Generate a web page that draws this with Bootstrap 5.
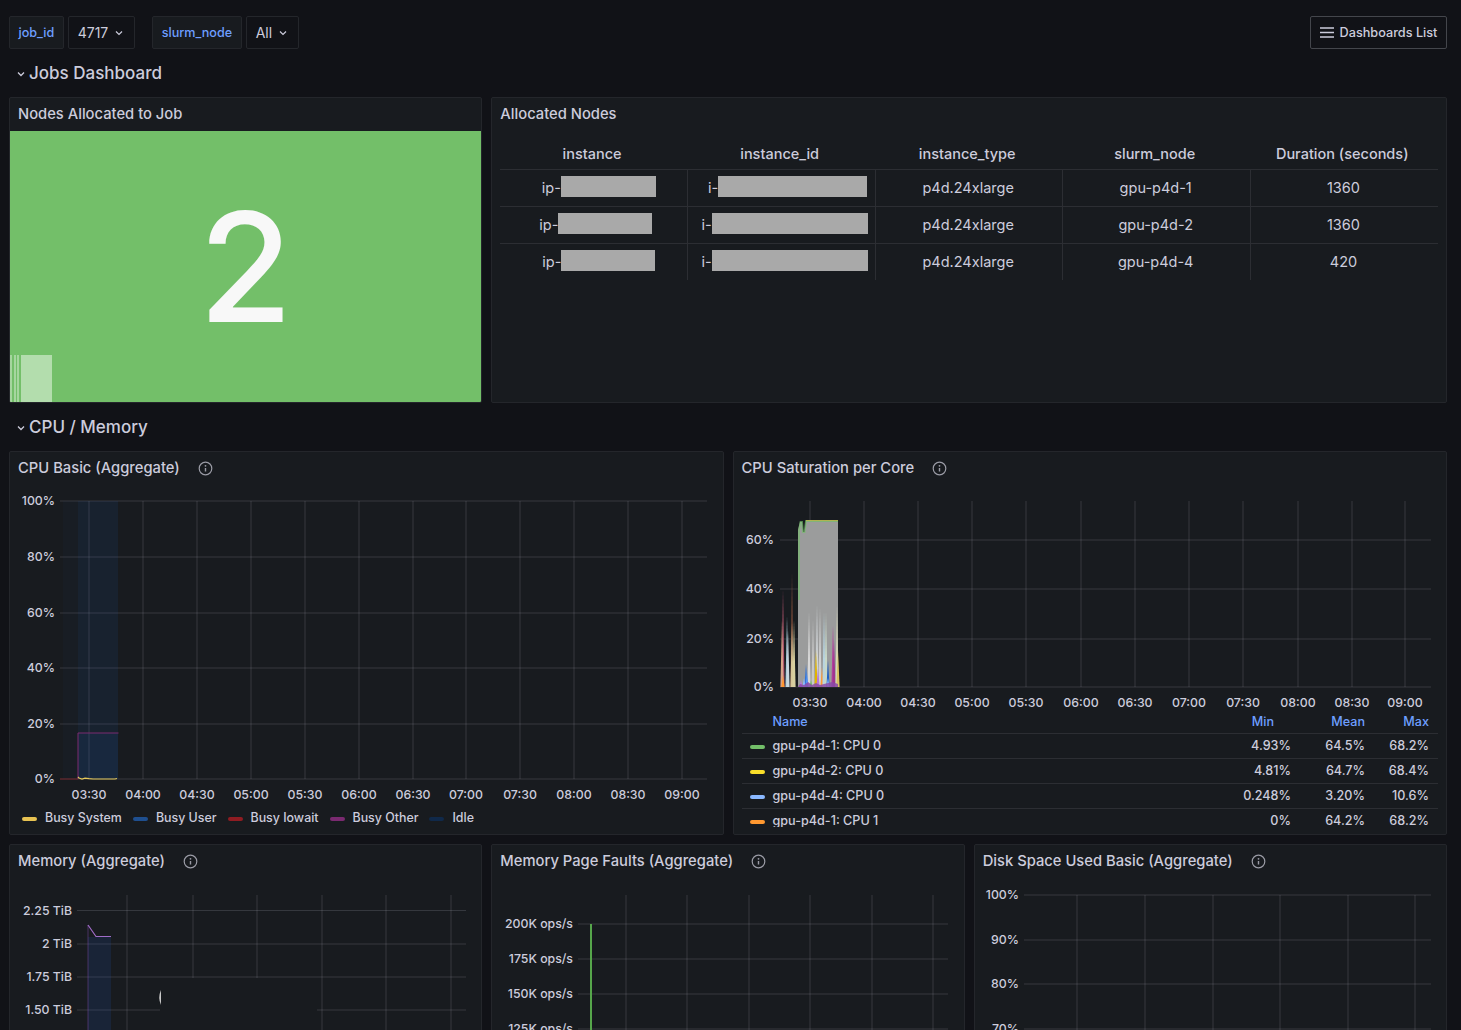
<!DOCTYPE html>
<html lang="en">
<head>
    <meta charset="UTF-8">
    <title>Jobs Dashboard</title>
    <link rel="stylesheet" href="https://cdn.jsdelivr.net/npm/bootstrap@5.3.2/dist/css/bootstrap.min.css">
    <style>
        html, body { height: 1030px; overflow: hidden; }
        body { background: #111217; color: #ccccdc; font-family: Inter, "Liberation Sans", sans-serif; font-size: 14px; padding: 16px 14px 0 9px; }
        .dash-row { --bs-gutter-x: 9px; --bs-gutter-y: 0; }
        .var-tag, .var-val { height: 33px; border: 1px solid #24262b; border-radius: 2px; display: flex; align-items: center; font-size: 12.6px; font-weight: 500; }
        .var-tag { background: #181b1f; color: #6e9fff; padding: 2px 8.5px 0; }
        .var-val { color: #ccccdc; background: #111217; padding: 0 11px 0 9px; font-size: 14px; font-weight: 400; gap: 7px; }
        .tag-gap { margin-left: 17px; }
        .list-btn { height: 33px; width: 137px; padding: 0; border: 1px solid #44464c; border-radius: 2px; color: #ccccdc; font-size: 12.7px; font-weight: 500; gap: 6px; background: transparent; }
        .sect-title { height: 48px; font-size: 17px; font-weight: 500; color: #ccccdc; padding: 2px 0 0 8px; gap: 4px; }
        .dash-panel { background: #181b1f; border: 1px solid #24262b; border-radius: 2px; overflow: hidden; display: flex; flex-direction: column; }
        .h-stat { height: 306px; }
        .h-cpu { height: 384px; }
        .h-mem { height: 200px; margin-top: 9px; }
        .panel-head { height: 33px; flex: none; padding: 0 8px; font-size: 14.75px; font-weight: 500; gap: 18px; color: #ccccdc; }
        .stat-box { flex: 1; background: #73bf69; color: #f8f8f8; font-size: 152px; line-height: 1; position: relative; overflow: hidden; }
        .stat-box span { font-weight: 500; }
        .stat-spark { position: absolute; left: 0; bottom: 0; width: 42px; height: 47px; background: linear-gradient(90deg, #a5d69e 0 2px, #73bf69 2px 4px, #a5d69e 4px 6px, #73bf69 6px 7px, #a5d69e 7px 9px, #73bf69 9px 11px, #b3ddad 11px); }
        .nodes-wrap { padding: 0 8px; }
        .nodes-table { --bs-table-bg: transparent; --bs-table-color: #ccccdc; --bs-table-border-color: #2c2e33; table-layout: fixed; margin: 0; font-size: 14.5px; text-align: center; }
        .nodes-table th { height: 38px; font-weight: 500; padding: 8px 4px 0 0; vertical-align: middle; }
        .nodes-table td { height: 37px; padding: 0; vertical-align: middle; border-left: 1px solid #2c2e33; }
        .nodes-table td:first-child { border-left: 0; }
        .nodes-table td:nth-child(n+3) { padding-right: 2px; }
        .nodes-table tr:last-child td { border-bottom: 0; }
        .nodes-table td.pad-10 { padding-left: 10px; }
        .nodes-table td.pad-4 { padding-left: 4px; }
        .nodes-table td.pad-12 { padding-left: 12px; }
        .nodes-table td.pad-6 { padding-left: 6px; }
        .redact { display: inline-block; height: 21px; background: #a9a9a9; vertical-align: -4px; }
        .chart-svg { display: block; flex: none; }
        .chart-svg text { font-family: Inter, "Liberation Sans", sans-serif; font-size: 12.3px; font-weight: 500; fill: #ccccdc; }
        .legend-row { font-size: 12.4px; font-weight: 500; padding-left: 12px; }
        .legend-item { display: flex; align-items: center; gap: 8px; margin-right: 11px; }
        .legend-bottom { margin-bottom: 6px; }
        .seg { display: inline-block; width: 15px; height: 4px; border-radius: 2px; }
        .legend-clip { height: 118px; overflow: hidden; padding: 0 8px; }
        .stat-legend { --bs-table-bg: transparent; --bs-table-color: #ccccdc; --bs-table-border-color: #2c2e33; table-layout: fixed; margin: 0; font-size: 12.6px; font-weight: 500; }
        .stat-legend th { color: #6e9fff; font-weight: 500; padding: 0 9px 1px 0; height: 24px; text-align: right; vertical-align: bottom; }
        .stat-legend td { height: 25px; padding: 2px 9px 0 0; text-align: right; white-space: nowrap; vertical-align: middle; }
        .stat-legend th:first-child, .stat-legend td:first-child { text-align: left; padding-left: 31px; position: relative; width: auto; }
        .stat-legend th:nth-child(2) { width: 120px; padding-right: 26px; }
        .stat-legend th:nth-child(3) { width: 74px; }
        .stat-legend th:nth-child(4) { width: 64px; }
        .stat-legend .seg { position: absolute; left: 8px; top: 11px; }
    </style>
</head>
<body>
    <!-- Variables -->
    <div class="d-flex align-items-center">
        <div class="var-tag">job_id</div>
        <div class="var-val ms-1">4717 <svg width="8" height="6" viewBox="0 0 8 6"><path d="M1 1.5l3 3 3-3" fill="none" stroke="#ccccdc" stroke-width="1.2"/></svg></div>
        <div class="var-tag tag-gap">slurm_node</div>
        <div class="var-val ms-1">All <svg width="8" height="6" viewBox="0 0 8 6"><path d="M1 1.5l3 3 3-3" fill="none" stroke="#ccccdc" stroke-width="1.2"/></svg></div>
        <button class="btn list-btn ms-auto d-flex align-items-center justify-content-center">
            <svg width="14" height="11" viewBox="0 0 14 11"><path d="M0 1h14M0 5.500h14M0 10h14" stroke="#ccccdc" stroke-width="1.500"/></svg>
            Dashboards List
        </button>
    </div>

    <!-- Jobs Dashboard -->
    <div class="sect-title d-flex align-items-center">
        <svg width="8" height="6" viewBox="0 0 8 6"><path d="M1 1.5l3 3 3-3" fill="none" stroke="#ccccdc" stroke-width="1.3"/></svg>
        Jobs Dashboard
    </div>
    <div class="row dash-row">
        <div class="col-4">
            <div class="dash-panel h-stat">
                <div class="panel-head d-flex align-items-center">Nodes Allocated to Job</div>
                <div class="stat-box d-flex align-items-center justify-content-center">
                    <span>2</span>
                    <div class="stat-spark"></div>
                </div>
            </div>
        </div>
        <div class="col-8">
            <div class="dash-panel h-stat">
                <div class="panel-head d-flex align-items-center">Allocated Nodes</div>
                <div class="nodes-wrap">
                    <table class="table nodes-table">
                        <thead>
                            <tr><th>instance</th><th>instance_id</th><th>instance_type</th><th>slurm_node</th><th>Duration (seconds)</th></tr>
                        </thead>
                        <tbody>
                            <tr>
                                <td class="pad-10">ip-<span class="redact" style="width:95px"></span></td>
                                <td class="pad-12">i-<span class="redact" style="width:149px"></span></td>
                                <td>p4d.24xlarge</td><td>gpu-p4d-1</td><td>1360</td>
                            </tr>
                            <tr>
                                <td class="pad-4">ip-<span class="redact" style="width:94px"></span></td>
                                <td class="pad-6">i-<span class="redact" style="width:156px"></span></td>
                                <td>p4d.24xlarge</td><td>gpu-p4d-2</td><td>1360</td>
                            </tr>
                            <tr>
                                <td class="pad-10">ip-<span class="redact" style="width:94px"></span></td>
                                <td class="pad-6">i-<span class="redact" style="width:156px"></span></td>
                                <td>p4d.24xlarge</td><td>gpu-p4d-4</td><td>420</td>
                            </tr>
                        </tbody>
                    </table>
                </div>
            </div>
        </div>
    </div>

    <!-- CPU / Memory -->
    <div class="sect-title d-flex align-items-center">
        <svg width="8" height="6" viewBox="0 0 8 6"><path d="M1 1.5l3 3 3-3" fill="none" stroke="#ccccdc" stroke-width="1.3"/></svg>
        CPU / Memory
    </div>
    <div class="row dash-row">
        <div class="col-6">
            <div class="dash-panel h-cpu">
                <div class="panel-head d-flex align-items-center">CPU Basic (Aggregate) <span class="info-icon"></span></div>
                <svg class="chart-svg" id="cpuBasic" width="713" height="322" viewBox="10 485 713 322"></svg>
                <div class="legend-row legend-bottom d-flex align-items-center mt-auto">
                    <span class="legend-item"><i class="seg" style="background:#e8c352"></i>Busy System</span>
                    <span class="legend-item"><i class="seg" style="background:#1f4f8f"></i>Busy User</span>
                    <span class="legend-item"><i class="seg" style="background:#8f1c22"></i>Busy Iowait</span>
                    <span class="legend-item"><i class="seg" style="background:#7a2a70"></i>Busy Other</span>
                    <span class="legend-item"><i class="seg" style="background:#10294a"></i>Idle</span>
                </div>
            </div>
        </div>
        <div class="col-6">
            <div class="dash-panel h-cpu">
                <div class="panel-head d-flex align-items-center">CPU Saturation per Core <span class="info-icon"></span></div>
                <svg class="chart-svg" id="cpuSat" width="713" height="224" viewBox="734 485 713 224"></svg>
                <div class="legend-clip" id="satLegend"></div>
            </div>
        </div>
    </div>
    <div class="row dash-row">
        <div class="col-4">
            <div class="dash-panel h-mem">
                <div class="panel-head d-flex align-items-center">Memory (Aggregate) <span class="info-icon"></span></div>
                <svg class="chart-svg" id="memChart" width="472" height="152" viewBox="10 878 472 152"></svg>
            </div>
        </div>
        <div class="col-4">
            <div class="dash-panel h-mem">
                <div class="panel-head d-flex align-items-center">Memory Page Faults (Aggregate) <span class="info-icon"></span></div>
                <svg class="chart-svg" id="faultChart" width="472" height="152" viewBox="492 878 472 152"></svg>
            </div>
        </div>
        <div class="col-4">
            <div class="dash-panel h-mem">
                <div class="panel-head d-flex align-items-center">Disk Space Used Basic (Aggregate) <span class="info-icon"></span></div>
                <svg class="chart-svg" id="diskChart" width="473" height="152" viewBox="975 878 473 152"></svg>
            </div>
        </div>
    </div>

    <script>
        const GRID = 'rgba(204,204,220,0.17)';

        // info icon in the panel headers
        document.querySelectorAll('.info-icon').forEach(el => {
            el.innerHTML = `<svg width="15" height="15" viewBox="0 0 15 15" style="display:block"><circle cx="7.500" cy="7.500" r="6.300" fill="none" stroke="#9a9ba5" stroke-width="1.200"/><path d="M7.500 7v3.500" stroke="#9a9ba5" stroke-width="1.400"/><circle cx="7.500" cy="4.800" r=".9" fill="#9a9ba5"/></svg>`;
        });

        // grid and axis labels, in page coordinates
        function axes(o) {
            let s = '';
            o.yTicks.forEach(t => {
                s += `<line x1="${o.x0}" x2="${o.x1}" y1="${t[1]}" y2="${t[1]}" stroke="${GRID}"/>`;
                s += `<text x="${o.labelX}" y="${t[1] + 4}" text-anchor="end">${t[0]}</text>`;
            });
            o.xLines.forEach((x, i) => {
                s += `<line x1="${x}" x2="${x}" y1="${o.top}" y2="${o.bottom}" stroke="${GRID}"/>`;
                if (o.xLabels) s += `<text x="${x}" y="${o.xLabelY}" text-anchor="middle">${o.xLabels[i]}</text>`;
            });
            return s;
        }

        const times = ['03:30','04:00','04:30','05:00','05:30','06:00','06:30','07:00','07:30','08:00','08:30','09:00'];

        document.getElementById('cpuBasic').innerHTML = axes({
            x0: 60, x1: 707, top: 501, bottom: 779, labelX: 55, xLabelY: 799, xLabels: times,
            yTicks: [['100%',501],['80%',557],['60%',613],['40%',668],['20%',724],['0%',779]],
            xLines: [89,143,197,251,305,359,413,466,520,574,628,682]
        }) + `
            <rect x="63" y="501" width="15" height="278" fill="#1f60c4" opacity=".03"/>
            <rect x="78" y="501" width="40" height="278" fill="#1f60c4" opacity=".1"/>
            <rect x="78" y="733" width="40" height="46" fill="#1f60c4" opacity=".1"/>
            <path d="M60 779H78" stroke="#8f1c22" opacity=".7"/>
            <path d="M78 779V733H118.500" fill="none" stroke="#7a2a70" stroke-width="1"/>
            <path d="M78 777l1 1 3 1 3-.8 4 .5 4 .3h22l2-.5" fill="none" stroke="#e6c95a" stroke-width="1.200"/>`;

        // spikes of the saturation chart: x, top y, colour
        const spikes = [
            [783,590,'#b0556e'],[782,620,'#d7a48a'],[783,675,'#ff9830'],[787,616,'#a8c8d8'],[788,630,'#c8d8e0'],
            [792,572,'#7a4a3a'],[792,623,'#d8c89a'],[794,620,'#d8d0a0'],[809,612,'#d8d8d8'],[813,620,'#c8c8c8'],
            [806,664,'#3274d9'],[807,672,'#5794f2'],[817,605,'#cfd3d6'],[816,650,'#e0b400'],[820,608,'#d0d0d0'],
            [818,668,'#b877d9'],[822,667,'#ff9830'],[824,612,'#b8d4e0'],[826,612,'#c8d8c8'],[828,660,'#1f60c4'],
            [833,625,'#b33e9c'],[834,640,'#a03590'],[837,606,'#d8d8b8'],[838,650,'#d8c060'],[801,680,'#b877d9'],
            [811,680,'#73bf69'],[828,678,'#8ab8ff'],[804,678,'#8ab8ff']
        ];
        document.getElementById('cpuSat').innerHTML = axes({
            x0: 780, x1: 1431, top: 501, bottom: 687, labelX: 774, xLabelY: 707, xLabels: times,
            yTicks: [['60%',540],['40%',589],['20%',639],['0%',687]],
            xLines: [810,864,918,972,1026,1081,1135,1189,1243,1298,1352,1405]
        }) + `
            <path d="M798 687V530L800 522H802L803 532H804.500L806 521H838V687Z" fill="#9b9c9c"/>
            <path d="M799 600V530L800.500 522H802L803 532H804.500L806 521H838" fill="none" stroke="#73bf69" stroke-width="1.800" opacity=".65"/>
            <path d="M806 520.500H838" stroke="#c8c050" stroke-width=".8"/>
            ${spikes.map(p => `<path d="M${p[0] - 1.600} 687L${p[0]} ${p[1]}L${p[0] + 1.600} 687Z" fill="${p[2]}"/>`).join('')}
            <path d="M798 687L800 684L804 685L808 682L812 685L816 683L820 685L824 684L828 683L832 682L838 684V687Z" fill="#8a4aa8" opacity=".85"/>`;

        const rows = [
            ['#73bf69','gpu-p4d-1: CPU 0','4.93%','64.5%','68.2%'],
            ['#fade2a','gpu-p4d-2: CPU 0','4.81%','64.7%','68.4%'],
            ['#8ab8ff','gpu-p4d-4: CPU 0','0.248%','3.20%','10.6%'],
            ['#ff9830','gpu-p4d-1: CPU 1','0%','64.2%','68.2%']
        ];
        document.getElementById('satLegend').innerHTML = `
            <table class="table stat-legend">
                <thead><tr><th>Name</th><th>Min</th><th>Mean</th><th>Max</th></tr></thead>
                <tbody>${rows.map(r => `<tr><td><i class="seg" style="background:${r[0]}"></i>${r[1]}</td><td>${r[2]}</td><td>${r[3]}</td><td>${r[4]}</td></tr>`).join('')}</tbody>
            </table>`;

        document.getElementById('memChart').innerHTML = axes({
            x0: 77, x1: 466, top: 895, bottom: 1030, labelX: 72,
            yTicks: [['2.25 TiB',910.500],['2 TiB',944],['1.75 TiB',977],['1.50 TiB',1010]],
            xLines: [127,193,257,322,386,451]
        }) + `
            <rect x="88" y="937" width="23" height="93" fill="#1f60c4" opacity=".15"/>
            <path d="M88 1030V925" stroke="#7a4aa8" stroke-width="1" opacity=".5"/>
            <path d="M88 925L96 936.500H111" fill="none" stroke="#a06cc8" stroke-width="1.200"/>
            <rect x="160" y="978" width="157" height="52" fill="#181b1f"/>
            <path d="M161 990Q157.500 997.500 161 1005Z" fill="#c8c8c8"/>`;

        document.getElementById('faultChart').innerHTML = axes({
            x0: 578, x1: 948, top: 895, bottom: 1030, labelX: 573,
            yTicks: [['200K ops/s',924],['175K ops/s',959],['150K ops/s',994],['125K ops/s',1029]],
            xLines: [626,687,749,810,872,933]
        }) + `<path d="M591 924V1030" stroke="#56a64b" stroke-width="2"/>`;

        document.getElementById('diskChart').innerHTML = axes({
            x0: 1024, x1: 1431, top: 895, bottom: 1030, labelX: 1019,
            yTicks: [['100%',895],['90%',940],['80%',984],['70%',1029]],
            xLines: [1077,1145,1213,1280,1348,1415]
        });
    </script>
    <script src="https://cdn.jsdelivr.net/npm/bootstrap@5.3.2/dist/js/bootstrap.bundle.min.js"></script>
</body>
</html>
